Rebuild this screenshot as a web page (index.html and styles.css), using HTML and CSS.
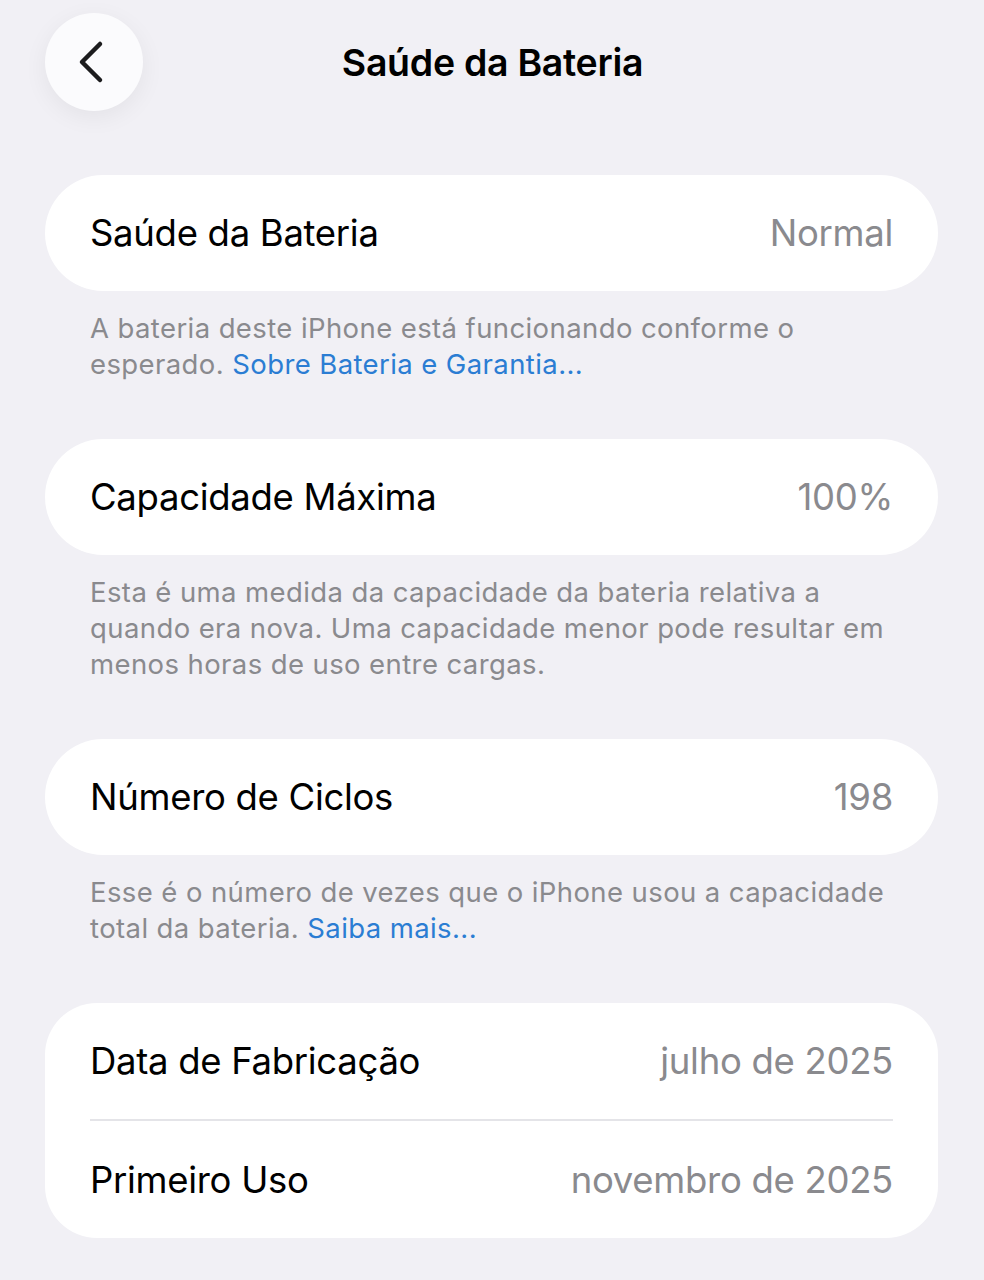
FILE: index.html
```html
<!DOCTYPE html>
<html lang="pt-BR">
<head>
  <meta charset="UTF-8" />
  <title>Saúde da Bateria</title>
  <meta name="viewport" content="width=device-width, initial-scale=1.0" />
  <link rel="stylesheet" href="styles.css">
</head>
<body>

<div class="screen">
  <header class="nav">
    <button class="back" aria-label="Voltar">
      <svg width="30" height="44" viewBox="0 0 30 44">
        <path d="M24 4 L6 22 L24 40" fill="none" stroke="#1c1c1e" stroke-width="4.5" stroke-linecap="round" stroke-linejoin="round"/>
      </svg>
    </button>
    <h1 class="nav-title">Saúde da Bateria</h1>
  </header>

  <section class="group">
    <div class="card">
      <div class="row">
        <span class="label">Saúde da Bateria</span>
        <span class="value">Normal</span>
      </div>
    </div>
    <p class="footer"><span>A bateria deste iPhone está funcionando conforme o</span> <span>esperado.</span> <a href="#">Sobre Bateria e Garantia...</a></p>
  </section>

  <section class="group">
    <div class="card">
      <div class="row">
        <span class="label">Capacidade Máxima</span>
        <span class="value">100%</span>
      </div>
    </div>
    <p class="footer">Esta é uma medida da capacidade da bateria relativa a quando era nova. Uma capacidade menor pode resultar em menos horas de uso entre cargas.</p>
  </section>

  <section class="group">
    <div class="card">
      <div class="row">
        <span class="label">Número de Ciclos</span>
        <span class="value">198</span>
      </div>
    </div>
    <p class="footer"><span>Esse é o número de vezes que o iPhone usou a capacidade</span> <span>total da bateria.</span> <a href="#">Saiba mais...</a></p>
  </section>

  <section class="group">
    <div class="card card-list">
      <div class="row">
        <span class="label">Data de Fabricação</span>
        <span class="value">julho de 2025</span>
      </div>
      <div class="row">
        <span class="label">Primeiro Uso</span>
        <span class="value">novembro de 2025</span>
      </div>
    </div>
  </section>
</div>

</body>
</html>
```

FILE: styles.css
```css
* { margin: 0; padding: 0; box-sizing: border-box; }

body {
  font-family: Inter, 'Noto Sans', sans-serif;
  background: #f1f0f5;
  color: #000;
  width: 984px;
  height: 1280px;
  overflow: hidden;
}

.screen {
  padding: 13px 46px 0 45px;
}

.nav {
  display: flex;
  align-items: center;
  height: 98px;
  margin-bottom: 64px;
  position: relative;
}

.back {
  width: 98px;
  height: 98px;
  border-radius: 50%;
  border: none;
  background: #fbfbfd;
  box-shadow: 0 6px 24px rgba(0, 0, 0, 0.06);
  display: flex;
  align-items: center;
  justify-content: center;
  padding-right: 6px;
}

.nav-title {
  position: absolute;
  left: 0;
  right: 0;
  text-align: center;
  font-size: 37.5px;
  font-weight: 600;
  letter-spacing: -0.3px;
  pointer-events: none;
  padding-left: 2px;
}

.group {
  margin-bottom: 57px;
}

.card {
  background: #fff;
  border-radius: 58px;
}

.card-list {
  border-radius: 52px;
}

.row {
  display: flex;
  justify-content: space-between;
  align-items: center;
  height: 116px;
  margin: 0 45px;
  font-size: 36.5px;
  letter-spacing: -0.3px;
}

.card-list .row + .row {
  border-top: 2px solid #e4e4e8;
  height: 119px;
}

.value {
  color: #8a8a8e;
}

.footer {
  padding: 19px 45px 0;
  font-size: 27.5px;
  line-height: 36px;
  color: #8a8a8e;
  letter-spacing: 0.4px;
}

.footer a {
  color: #2b7dd3;
  text-decoration: none;
}
```
